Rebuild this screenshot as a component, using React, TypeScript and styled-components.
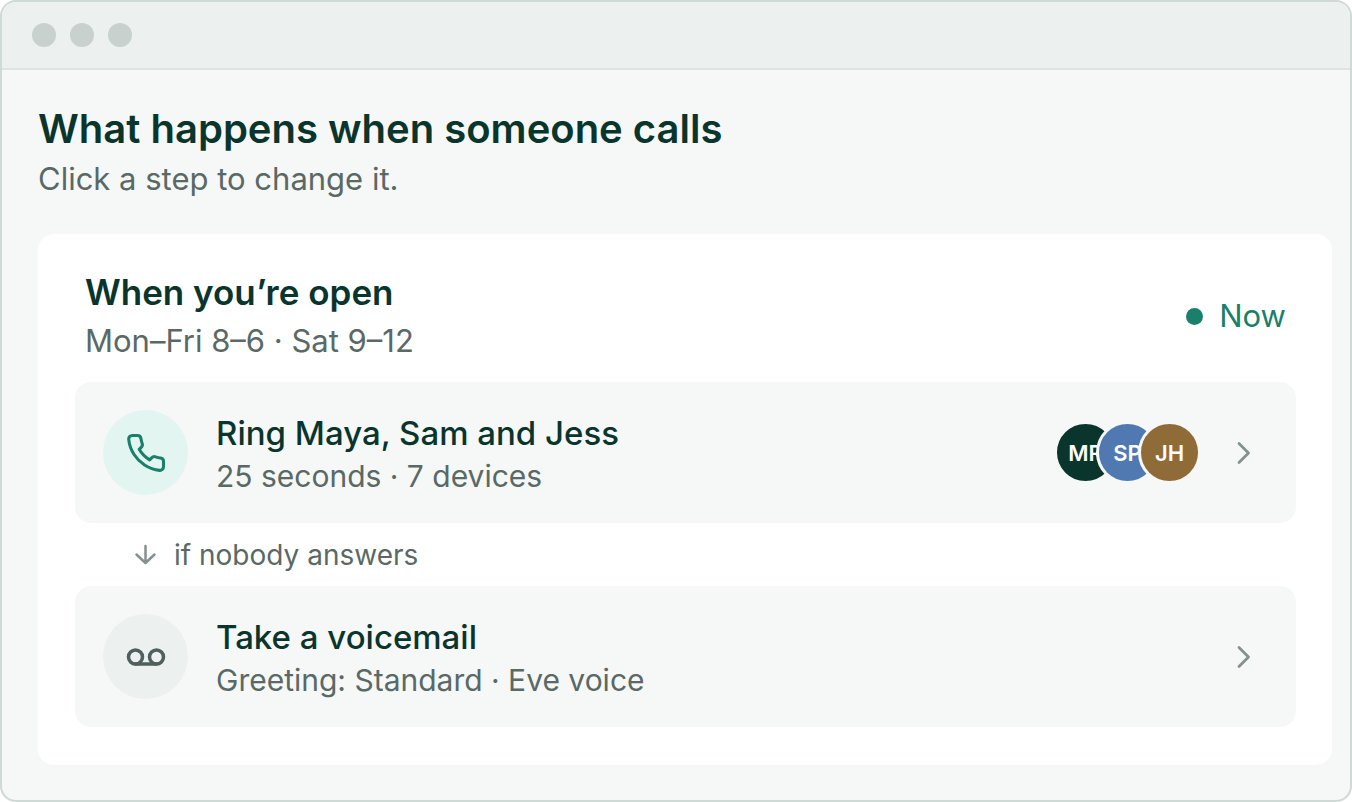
import React from 'react';
import styled, { createGlobalStyle } from 'styled-components';

const GlobalStyle = createGlobalStyle`
  *, *::before, *::after { box-sizing: border-box; }
  html, body, #root { height: 100%; }
  body {
    margin: 0;
    background: #ffffff;
    color: #0a352d;
    font-family: Inter, 'Liberation Sans', sans-serif;
  }
  h1, h2, p { margin: 0; }
`;

const Window = styled.div`
  display: flex;
  flex-direction: column;
  min-height: 100%;
  border: 2px solid #cfd9d6;
  border-radius: 16px;
  background: #f5f8f7;
  overflow: hidden;
`;

const TitleBar = styled.header`
  display: flex;
  align-items: center;
  gap: 14px;
  height: 68px;
  padding: 0 30px;
  border-bottom: 2px solid #dde4e2;
  background: #ecf0ef;
`;

const WindowDot = styled.span`
  width: 24px;
  height: 24px;
  border-radius: 50%;
  background: #c8d1ce;
`;

const Main = styled.main`
  flex: 1;
  padding: 33px 18px 33px 36px;
`;

const Title = styled.h1`
  font-size: 40px;
  line-height: 52px;
  font-weight: 600;
`;

const Muted = styled.p`
  font-size: 31px;
  line-height: 48px;
  color: #5a6966;
`;

const Card = styled.section`
  margin-top: 31px;
  padding: 33px 36px 38px 37px;
  border-radius: 16px;
  background: #ffffff;
`;

const CardHeader = styled.div`
  display: flex;
  align-items: center;
  justify-content: space-between;
  padding: 0 10px;
  margin-bottom: 17px;
`;

const CardTitle = styled.h2`
  font-size: 35px;
  line-height: 50px;
  font-weight: 600;
`;

const Status = styled.span`
  display: flex;
  align-items: center;
  gap: 16px;
  font-size: 31px;
  line-height: 48px;
  color: #1a7f6b;
`;

const StatusDot = styled.span`
  width: 17px;
  height: 17px;
  border-radius: 50%;
  background: #1a7f6b;
`;

const Step = styled.button`
  display: flex;
  align-items: center;
  gap: 28px;
  width: 100%;
  padding: 28px 39px 28px 28px;
  border: 0;
  border-radius: 16px;
  background: #f5f8f7;
  color: inherit;
  font: inherit;
  text-align: left;
  cursor: pointer;
`;

const StepIcon = styled.span<{ $active?: boolean }>`
  display: grid;
  place-items: center;
  flex: none;
  width: 85px;
  height: 85px;
  border-radius: 50%;
  background: ${({ $active }) => ($active ? '#e3f5f0' : '#ecf0ef')};
  color: ${({ $active }) => ($active ? '#1a7f6b' : '#4f5f5b')};
`;

const StepText = styled.span`
  display: flex;
  flex: 1;
  flex-direction: column;
`;

const StepTitle = styled.span`
  font-size: 33px;
  line-height: 47px;
  font-weight: 500;
`;

const StepDetail = styled.span`
  font-size: 30px;
  line-height: 38px;
  color: #5a6966;
`;

const Avatars = styled.span`
  display: flex;
`;

const Avatar = styled.span<{ $color: string }>`
  display: grid;
  place-items: center;
  width: 63px;
  height: 63px;
  border: 3px solid #f5f8f7;
  border-radius: 50%;
  background: ${({ $color }) => $color};
  color: #ffffff;
  font-size: 22px;
  line-height: 28px;
  font-weight: 600;

  & + & { margin-left: -21px; }
`;

const Connector = styled.div`
  display: flex;
  align-items: center;
  gap: 15px;
  padding: 9px 56px 8px;
  color: #5a6966;
  font-size: 28px;
  line-height: 46px;
`;

const Icon = styled.svg`
  flex: none;
  fill: none;
  stroke: currentColor;
  stroke-linecap: round;
  stroke-linejoin: round;
`;

const MutedIcon = styled(Icon)`
  color: #85918e;
`;

const PhoneIcon = () => (
  <Icon width="42" height="42" viewBox="0 0 24 24" strokeWidth="1.75" aria-hidden="true">
    <path d="M22 16.92v3a2 2 0 0 1-2.18 2 19.79 19.79 0 0 1-8.63-3.07 19.5 19.5 0 0 1-6-6 19.79 19.79 0 0 1-3.07-8.67A2 2 0 0 1 4.11 2h3a2 2 0 0 1 2 1.72 12.84 12.84 0 0 0 .7 2.81 2 2 0 0 1-.45 2.11L8.09 9.91a16 16 0 0 0 6 6l1.27-1.27a2 2 0 0 1 2.11-.45 12.84 12.84 0 0 0 2.81.7A2 2 0 0 1 22 16.92z" />
  </Icon>
);

const VoicemailIcon = () => (
  <Icon width="42" height="42" viewBox="0 0 24 24" strokeWidth="2" aria-hidden="true">
    <circle cx="6" cy="12" r="4" />
    <circle cx="18" cy="12" r="4" />
    <path d="M6 16h12" />
  </Icon>
);

const Chevron = () => (
  <MutedIcon width="28" height="28" viewBox="0 0 28 28" strokeWidth="2.75" aria-hidden="true">
    <path d="M10 4.500l9.500 9.500-9.500 9.500" />
  </MutedIcon>
);

const ArrowDown = () => (
  <MutedIcon width="28" height="28" viewBox="0 0 28 28" strokeWidth="2.5" aria-hidden="true">
    <path d="M14.500 5v17M5.500 13.500l9 8.500 9-8.500" />
  </MutedIcon>
);

const people = [
  { initials: 'MR', color: '#0a352d' },
  { initials: 'SP', color: '#4f79b0' },
  { initials: 'JH', color: '#8f6b38' },
];

export default function App() {
  return (
    <>
      <GlobalStyle />
      <Window>
        <TitleBar>
          <WindowDot />
          <WindowDot />
          <WindowDot />
        </TitleBar>
        <Main>
          <Title>What happens when someone calls</Title>
          <Muted>Click a step to change it.</Muted>
          <Card>
            <CardHeader>
              <div>
                <CardTitle>When you’re open</CardTitle>
                <Muted>Mon–Fri 8–6 · Sat 9–12</Muted>
              </div>
              <Status>
                <StatusDot />
                Now
              </Status>
            </CardHeader>
            <Step type="button">
              <StepIcon $active>
                <PhoneIcon />
              </StepIcon>
              <StepText>
                <StepTitle>Ring Maya, Sam and Jess</StepTitle>
                <StepDetail>25 seconds · 7 devices</StepDetail>
              </StepText>
              <Avatars>
                {people.map((p) => (
                  <Avatar key={p.initials} $color={p.color}>
                    {p.initials}
                  </Avatar>
                ))}
              </Avatars>
              <Chevron />
            </Step>
            <Connector>
              <ArrowDown />
              if nobody answers
            </Connector>
            <Step type="button">
              <StepIcon>
                <VoicemailIcon />
              </StepIcon>
              <StepText>
                <StepTitle>Take a voicemail</StepTitle>
                <StepDetail>Greeting: Standard · Eve voice</StepDetail>
              </StepText>
              <Chevron />
            </Step>
          </Card>
        </Main>
      </Window>
    </>
  );
}
